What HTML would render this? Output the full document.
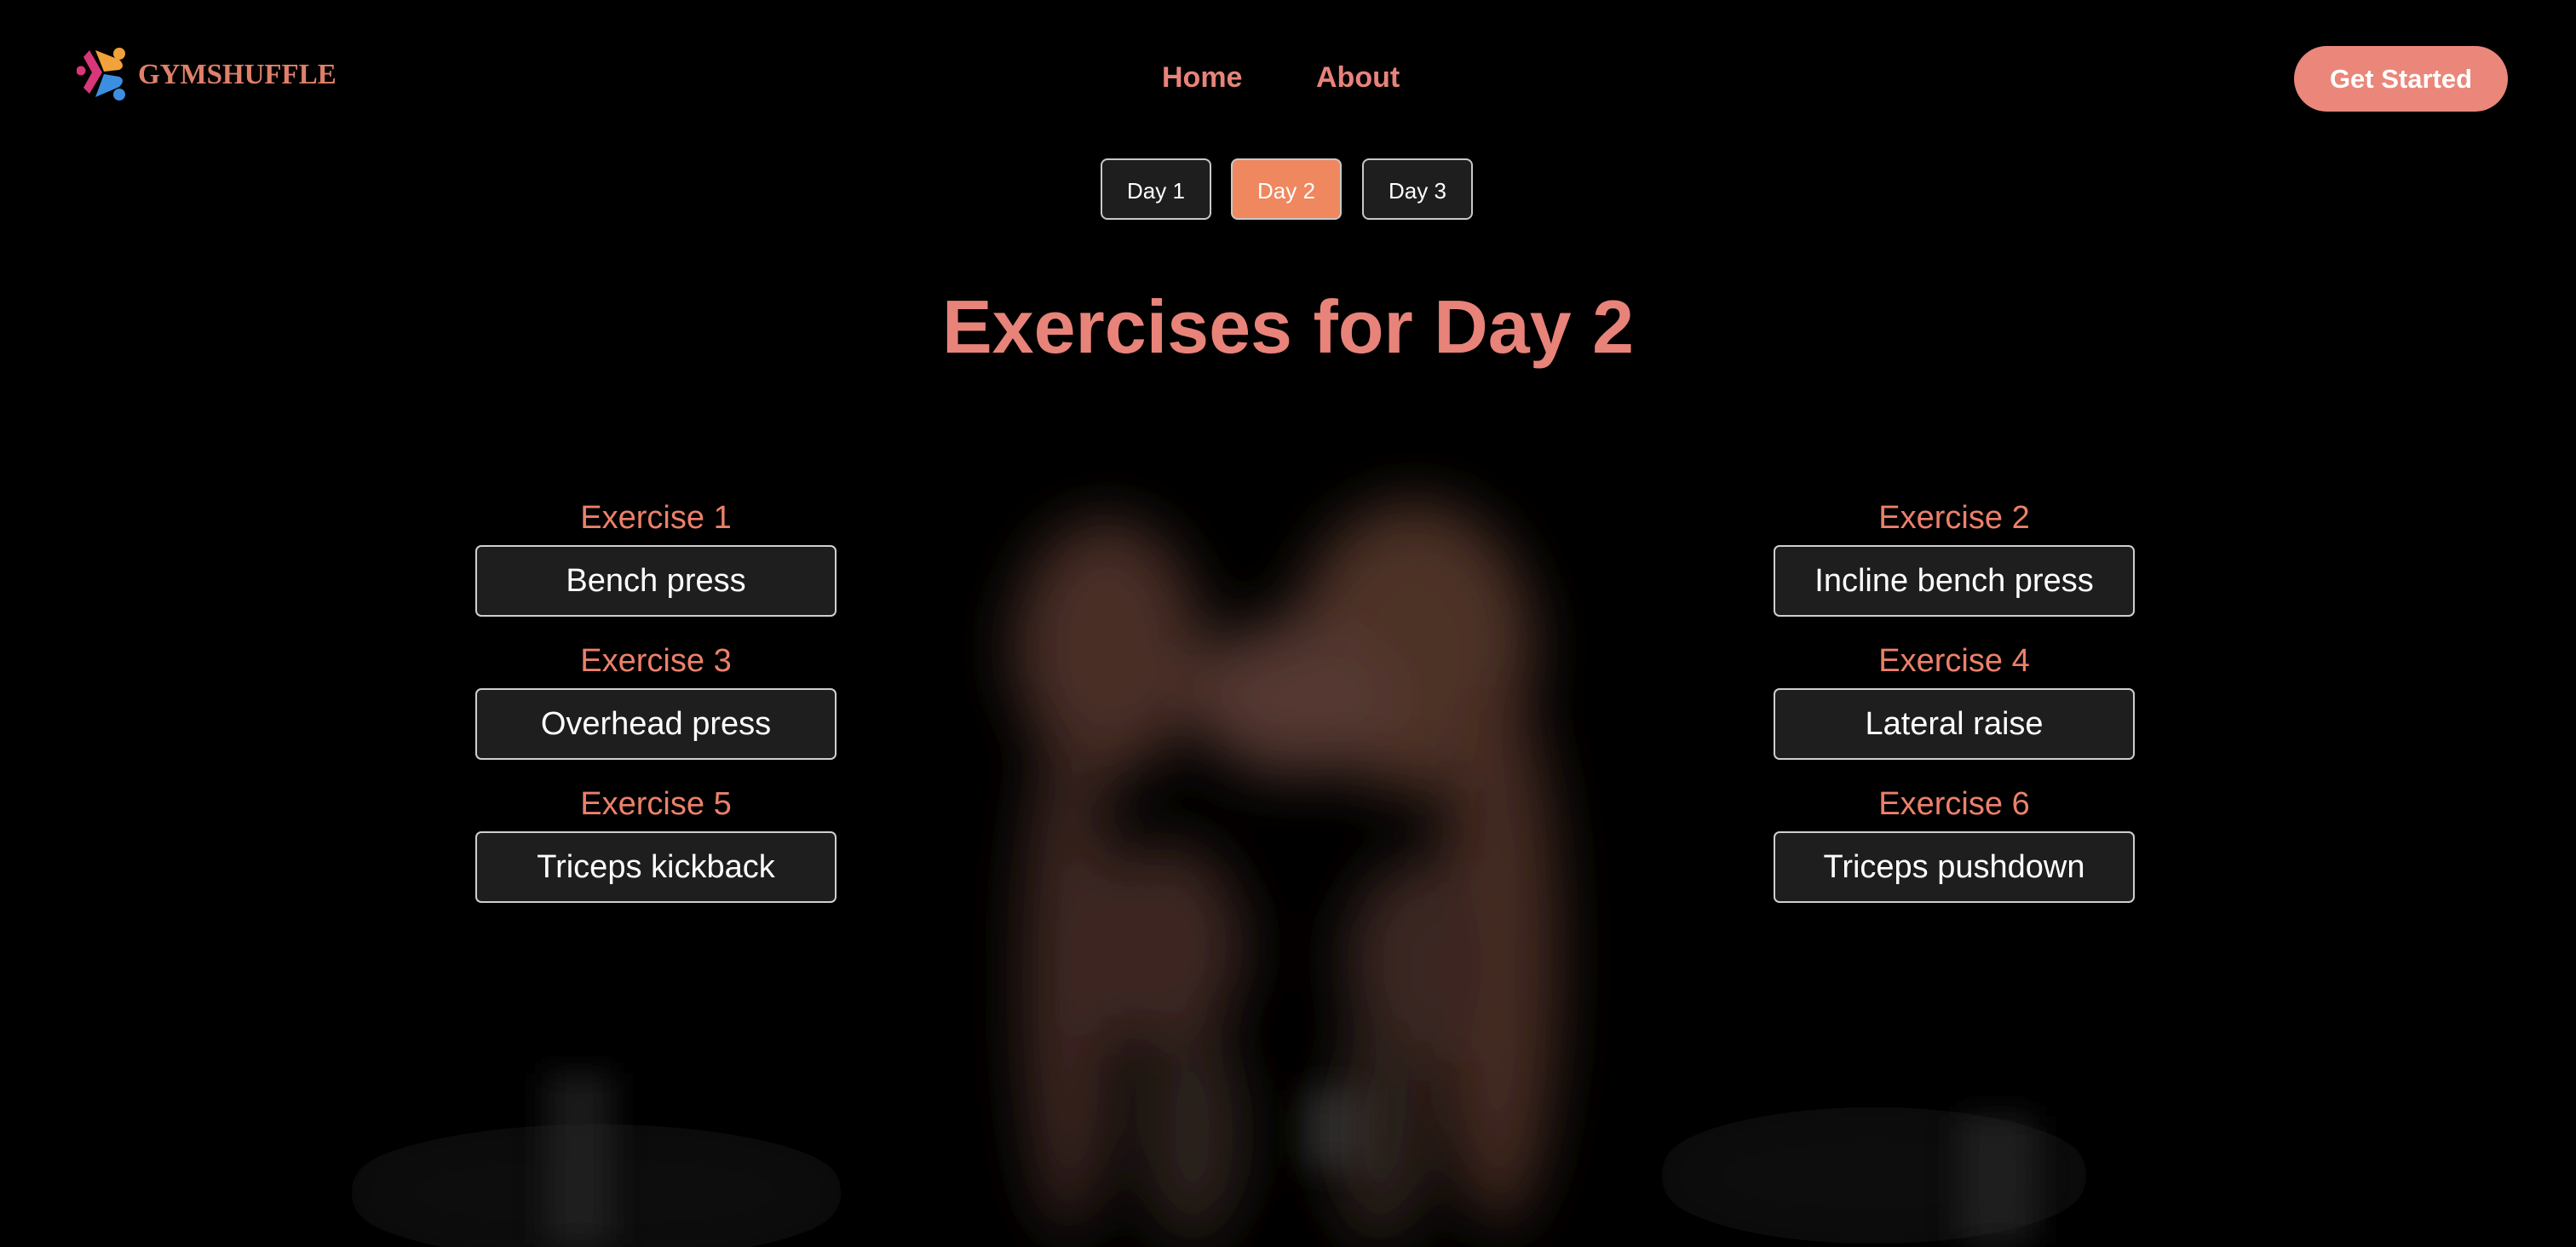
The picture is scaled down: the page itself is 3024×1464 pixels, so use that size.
<!DOCTYPE html>
<html><head><style>
html,body{margin:0;padding:0;width:3024px;height:1464px;background:#000;overflow:hidden;font-family:"Liberation Sans",Arial,sans-serif;position:relative}
.abs{position:absolute}
.nav{color:#e8837a;font-weight:bold;font-size:34px}
.day{position:absolute;top:186px;width:130px;height:72px;border:2px solid #c8c8c8;border-radius:8px;background:#1e1e1e;color:#fff;font-size:26px;text-align:center;line-height:72px;box-sizing:border-box}
.lbl{position:absolute;width:424px;text-align:center;color:#ec806b;font-size:38px;line-height:40px}
.box{position:absolute;width:424px;height:84px;box-sizing:border-box;border:2px solid #cfcfcf;border-radius:7px;background:#1e1e1e;color:#fff;font-size:38px;text-align:center;line-height:80px}
</style></head><body>
<svg class="abs" style="left:0;top:0" width="3024" height="1464">
<defs><filter id="b" x="-50%" y="-50%" width="200%" height="200%"><feGaussianBlur stdDeviation="35"/></filter>
<filter id="b2"><feGaussianBlur stdDeviation="18"/></filter></defs>
<g filter="url(#b)">
<ellipse cx="1300" cy="760" rx="110" ry="150" fill="#4a2e26"/>
<ellipse cx="1660" cy="760" rx="140" ry="170" fill="#4e3128"/>
<ellipse cx="1520" cy="820" rx="120" ry="90" fill="#553730"/>
<ellipse cx="1255" cy="1150" rx="55" ry="300" fill="#3e2722"/>
<ellipse cx="1760" cy="1120" rx="70" ry="320" fill="#452b24"/>
<ellipse cx="1370" cy="1110" rx="90" ry="120" fill="#3e2824"/>
<ellipse cx="1660" cy="1130" rx="80" ry="120" fill="#3a2622"/>
<ellipse cx="1400" cy="1330" rx="60" ry="130" fill="#2e201e"/>
<ellipse cx="1620" cy="1330" rx="60" ry="130" fill="#2e201e"/>
<ellipse cx="700" cy="1400" rx="300" ry="80" fill="#111"/>
<ellipse cx="2200" cy="1380" rx="260" ry="80" fill="#111"/>
</g>
<g filter="url(#b2)" opacity="0.6">
<rect x="1530" y="1280" width="70" height="90" fill="#3a3a3a"/>
<rect x="2300" y="1310" width="90" height="150" fill="#2a2a2a"/>
<rect x="640" y="1260" width="80" height="200" fill="#2a2a2a"/>
</g>
</svg>
<svg class="abs" style="left:90px;top:56px" width="66" height="62" viewBox="0 0 66 62" style="overflow:visible">
<g transform="scale(1.0)">
<circle cx="5" cy="27" r="5.5" fill="#d8377a"/>
<path d="M15 3 L30 29 L15 54 L8 47 L18 29 L8 11Z" fill="#d8377a"/>
<path d="M22 3 L50 14 Q58 22 50 26 L32 28 Z" fill="#f2a23a"/>
<circle cx="50" cy="7" r="7" fill="#f2a23a"/>
<path d="M22 58 L50 46 Q58 38 50 34 L32 31 Z" fill="#3c8ee0"/>
<circle cx="50" cy="55" r="7" fill="#3c8ee0"/>
</g>
</svg>
<div class="abs" style="left:162px;top:69px;font-family:'Liberation Serif',serif;font-weight:bold;font-size:34px;color:#e0806a;transform:scaleX(0.97);transform-origin:left">GYMSHUFFLE</div>
<div class="abs nav" style="left:1364px;top:72px">Home</div>
<div class="abs nav" style="left:1545px;top:72px">About</div>
<div class="abs" style="left:2693px;top:54px;width:251px;height:77px;border-radius:39px;background:#ea877a;color:#fff;font-weight:bold;font-size:31px;text-align:center;line-height:77px">Get Started</div>
<div class="day" style="left:1292px">Day 1</div>
<div class="day" style="left:1445px;background:#ef875f">Day 2</div>
<div class="day" style="left:1599px">Day 3</div>
<div class="abs" style="left:0;width:3024px;top:334px;text-align:center;color:#e8837a;font-weight:bold;font-size:88px;line-height:100px">Exercises for Day 2</div>

<div class="lbl" style="left:558px;top:588px">Exercise 1</div>
<div class="box" style="left:558px;top:640px">Bench press</div>
<div class="lbl" style="left:558px;top:756px">Exercise 3</div>
<div class="box" style="left:558px;top:808px">Overhead press</div>
<div class="lbl" style="left:558px;top:924px">Exercise 5</div>
<div class="box" style="left:558px;top:976px">Triceps kickback</div>

<div class="lbl" style="left:2082px;top:588px">Exercise 2</div>
<div class="box" style="left:2082px;top:640px">Incline bench press</div>
<div class="lbl" style="left:2082px;top:756px">Exercise 4</div>
<div class="box" style="left:2082px;top:808px">Lateral raise</div>
<div class="lbl" style="left:2082px;top:924px">Exercise 6</div>
<div class="box" style="left:2082px;top:976px">Triceps pushdown</div>
</body></html>
